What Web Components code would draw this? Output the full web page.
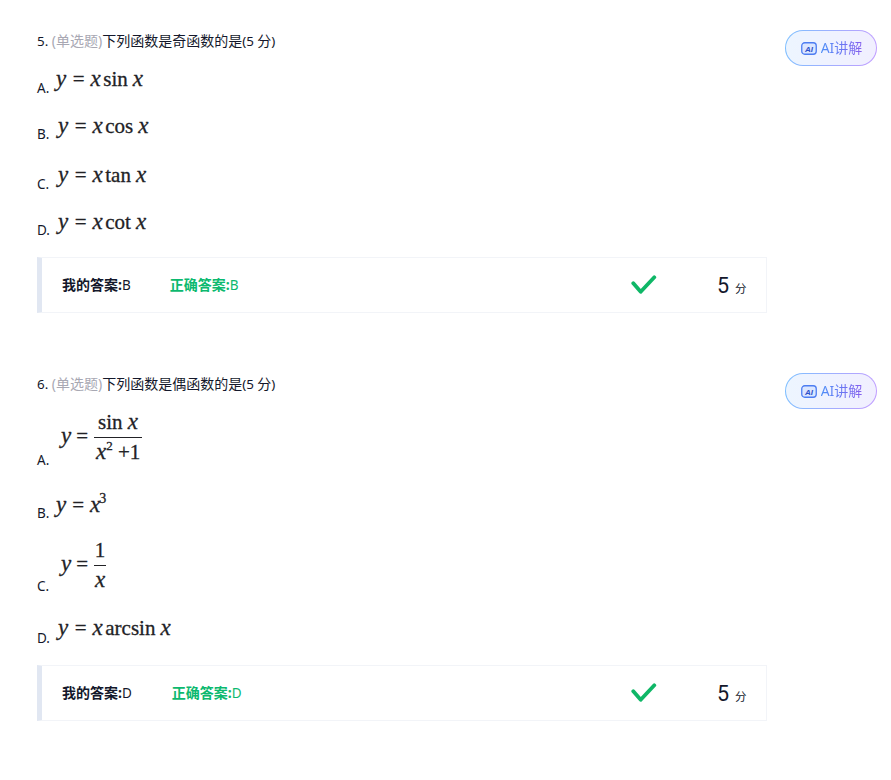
<!DOCTYPE html>
<html lang="zh">
<head>
<meta charset="utf-8">
<title>测验</title>
<style>
html,body{margin:0;background:#fff}
body{padding:0 14px 0 37px;font-family:"Noto Sans","Noto Sans CJK SC",sans-serif;font-size:14px;color:#14182b}
math-frac i{font-size:23px}
sup.s{font-size:13px;line-height:0;vertical-align:9px}
</style>
</head>
<body>
<quiz-item number="5." kind="下列函数是奇函数的是" mine="B" right="B" score="5" gap="39">
  <quiz-option label="A." h="46" off="3" ml="0"><math-line fn="sin"></math-line></quiz-option>
  <quiz-option label="B." h="46" off="2" ml="2"><math-line fn="cos"></math-line></quiz-option>
  <quiz-option label="C." h="50" off="3" ml="2"><math-line fn="tan"></math-line></quiz-option>
  <quiz-option label="D." h="46" off="2" ml="2"><math-line fn="cot"></math-line></quiz-option>
</quiz-item>
<quiz-item number="6." kind="下列函数是偶函数的是" mine="D" right="D" score="5" gap="40">
  <quiz-option label="A." h="75" off="2" ml="5"><math-frac bar="48"><span slot="top">sin <i>x</i></span><span slot="bottom"><i>x</i><sup class="s">2</sup> +1</span></math-frac></quiz-option>
  <quiz-option label="B." h="53" off="2" ml="0"><math-power></math-power></quiz-option>
  <quiz-option label="C." h="73" off="0" ml="5"><math-frac bar="12"><span slot="top">1</span><span slot="bottom"><i>x</i></span></math-frac></quiz-option>
  <quiz-option label="D." h="52" off="4" ml="2"><math-line fn="arcsin"></math-line></quiz-option>
</quiz-item>
<script>
const mathBase=`font-family:"Liberation Serif",serif;font-size:21px;color:#222226;line-height:24px;white-space:nowrap;-webkit-text-stroke:.3px #222226;`;
class MathLine extends HTMLElement{
  connectedCallback(){
    const fn=this.getAttribute('fn');
    const s=this.attachShadow({mode:'open'});
    s.innerHTML=`<style>:host{display:inline-block;${mathBase}}
      i{font-style:italic;font-size:23px}.eq{margin:0 6px 0 6.5px}.fn{margin:0 5px 0 2.5px}</style>
      <i>y</i><span class="eq">=</span><i>x</i><span class="fn">${fn}</span><i>x</i>`;
  }
}
class MathPower extends HTMLElement{
  connectedCallback(){
    const s=this.attachShadow({mode:'open'});
    s.innerHTML=`<style>:host{display:inline-block;${mathBase}}
      i{font-size:23px}.eq{margin:0 6px 0 6px}sup{font-size:14px;line-height:0;vertical-align:9px;margin-left:-1px}</style>
      <i>y</i><span class="eq">=</span><i>x</i><sup>3</sup>`;
  }
}
class MathFrac extends HTMLElement{
  connectedCallback(){
    const s=this.attachShadow({mode:'open'});
    s.innerHTML=`<style>:host{display:inline-flex;align-items:center;${mathBase}}
      i{font-size:23px}.eq{margin:0 6px 0 5px}.lhs{padding-bottom:3px}
      .f{display:flex;flex-direction:column;width:${this.getAttribute('bar')}px;text-align:center}
      .t{padding:0 0 3px;border-bottom:1.5px solid #222226;line-height:24px}
      .b{padding:2px 0 0;line-height:24px}</style>
      <span class="lhs"><i>y</i><span class="eq">=</span></span><span class="f"><span class="t"><slot name="top"></slot></span><span class="b"><slot name="bottom"></slot></span></span>`;
  }
}
class QuizOption extends HTMLElement{
  connectedCallback(){
    const a=n=>this.getAttribute(n);
    const s=this.attachShadow({mode:'open'});
    s.innerHTML=`<style>:host{display:flex;align-items:flex-end;height:${a('h')}px}
      .l{line-height:20px;flex:none;width:19px;font-size:13.5px}
      .m{padding-bottom:${+a('off')+4}px;margin-left:${a('ml')}px;line-height:0}</style>
      <span class="l">${a('label')}</span><span class="m"><slot></slot></span>`;
  }
}
class AiButton extends HTMLElement{
  connectedCallback(){
    const s=this.attachShadow({mode:'open'});
    s.innerHTML=`<style>:host{display:inline-flex;box-sizing:border-box;width:92px;height:36px;align-items:center;justify-content:center;gap:4px;padding-left:1px;border-radius:18px;border:1px solid transparent;
      background:linear-gradient(90deg,#edf5ff,#f1efff) padding-box,linear-gradient(100deg,#7cc0ff,#c39dff) border-box;cursor:pointer}
      span{font-size:14px;line-height:20px;margin-top:-1px;background:linear-gradient(90deg,#4d8ef7,#8660ee);-webkit-background-clip:text;background-clip:text;color:transparent}
      svg{display:block}</style>
      <svg width="16" height="13" viewBox="0 0 16 13"><rect x="0.75" y="0.75" width="14.5" height="11.5" rx="3" fill="#dbe6ff" stroke="#4d7df2" stroke-width="1.3"/><text x="8" y="9.5" text-anchor="middle" font-family="Liberation Sans" font-size="8" font-weight="700" font-style="italic" fill="#2c50c8">AI</text></svg>
      <span>AI讲解</span>`;
  }
}
class AnswerBar extends HTMLElement{
  connectedCallback(){
    const a=n=>this.getAttribute(n);
    const s=this.attachShadow({mode:'open'});
    s.innerHTML=`<style>:host{display:flex;align-items:center;box-sizing:border-box;height:56px;margin-top:17px;padding:0 0 2px 20px;border:1px solid #f2f4f8;border-left:5px solid #e1e7f2}
      b{font-weight:700}
      .mine{flex:none}.right{flex:none;margin-left:${a('gap')}px;color:#0cb96f}
      .lat{font-weight:400;font-size:13.5px}
      .check{margin-left:auto;display:block}
      .score{flex:none;width:49px;margin-left:60px;display:flex;align-items:baseline;gap:6px;padding-top:4px}
      .n{font-size:21.5px;line-height:24px;font-family:Roboto,"Noto Sans",sans-serif}.u{font-size:11.5px}</style>
      <span class="mine"><b>我的答案:</b><span class="lat">${a('mine')}</span></span>
      <span class="right"><b>正确答案:</b><span class="lat">${a('right')}</span></span>
      <svg class="check" width="26" height="20" viewBox="0 0 26 20"><path d="M2.3 9.3 L9.7 17.7 L23.3 3.3" fill="none" stroke="#0fb767" stroke-width="3.8" stroke-linecap="round" stroke-linejoin="round"/></svg>
      <span class="score"><span class="n">${a('score')}</span><span class="u">分</span></span>`;
  }
}
class QuizItem extends HTMLElement{
  connectedCallback(){
    const a=n=>this.getAttribute(n);
    const s=this.attachShadow({mode:'open'});
    s.innerHTML=`<style>:host{display:grid;grid-template-columns:730px 92px;column-gap:18px;align-items:start;padding:30px 0;box-sizing:border-box}
      .t{line-height:22px}.g{color:#a8a8b3}.lat{font-size:13.4px}</style>
      <div><div class="t"><span class="lat">${a('number')} </span><span class="g">(单选题)</span>${a('kind')}<span class="lat">(5 </span>分<span class="lat">)</span></div>
      <slot></slot>
      <answer-bar mine="${a('mine')}" right="${a('right')}" score="${a('score')}" gap="${a('gap')}"></answer-bar></div>
      <ai-button></ai-button>`;
  }
}
customElements.define('math-line',MathLine);
customElements.define('math-power',MathPower);
customElements.define('math-frac',MathFrac);
customElements.define('quiz-option',QuizOption);
customElements.define('ai-button',AiButton);
customElements.define('answer-bar',AnswerBar);
customElements.define('quiz-item',QuizItem);
</script>
</body>
</html>
